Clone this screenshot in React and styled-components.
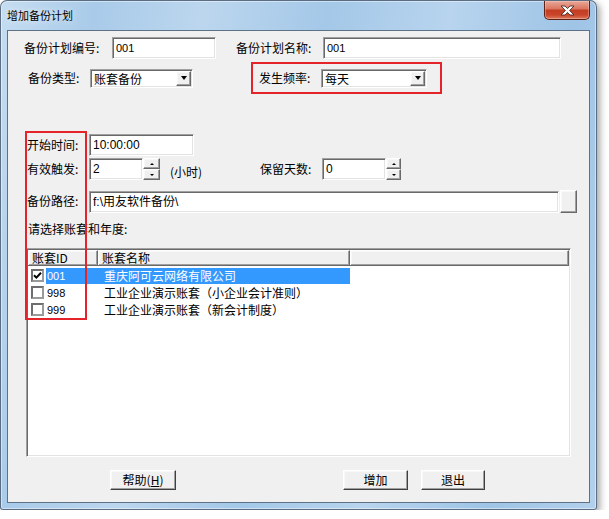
import styled, { createGlobalStyle, css } from "styled-components";

const GlobalStyle = createGlobalStyle`
  html, body {
    margin: 0;
    padding: 0;
    background: #ffffff;
  }
  body {
    font-family: "Noto Sans CJK SC", "Liberation Sans", sans-serif;
    font-size: 12px;
    color: #000;
  }
  * {
    box-sizing: border-box;
  }
`;

// classic win32 3d edges
const sunken = css`
  border: 1px solid;
  border-color: #a0a0a0 #ffffff #ffffff #a0a0a0;
  box-shadow: inset 1px 1px 0 #696969, inset -1px -1px 0 #e3e3e3;
`;

const raised = css`
  border: 1px solid;
  border-color: #ffffff #696969 #696969 #ffffff;
  box-shadow: inset -1px -1px 0 #a0a0a0, inset 1px 1px 0 #f8f8f8;
  background: #f0f0f0;
`;

const Window = styled.div`
  width: 597px;
  height: 510px;
  padding: 0 7px 7px;
  border-radius: 7px 7px 3px 3px;
  background: linear-gradient(
    100deg,
    #c6ddf1 0%,
    #a9cbe9 14%,
    #bcd6ee 30%,
    #a4c8e8 48%,
    #b8d4ee 66%,
    #9fc4e6 84%,
    #b3d1ec 100%
  );
  box-shadow: inset 0 0 0 1px rgba(38, 58, 82, 0.7),
    inset 0 0 0 2px rgba(255, 255, 255, 0.45), 3px 3px 7px rgba(0, 0, 0, 0.35);
  display: flex;
  flex-direction: column;
`;

const TitleBar = styled.div`
  height: 30px;
  display: flex;
  justify-content: space-between;
  align-items: flex-start;
`;

const Title = styled.span`
  margin-top: 8px;
  font-size: 11px;
  line-height: 14px;
  color: #000;
  text-shadow: 0 0 6px rgba(255, 255, 255, 0.9);
`;

const CloseButton = styled.div`
  width: 46px;
  height: 19px;
  margin-top: 1px;
  border: 1px solid #5e2116;
  border-top: none;
  border-radius: 0 0 5px 5px;
  background: linear-gradient(
    180deg,
    #e9a898 0%,
    #da7863 42%,
    #c43c21 52%,
    #c9472b 78%,
    #de7a5f 100%
  );
  box-shadow: inset 0 0 0 1px rgba(255, 220, 210, 0.35);
  display: flex;
  align-items: center;
  justify-content: center;
`;

const Client = styled.div`
  flex: 1;
  position: relative;
  background: #f0f0f0;
  border: 1px solid #5d7287;
  display: flex;
  flex-direction: column;
`;

const Row = styled.div`
  display: flex;
  align-items: ${(p) => p.$align || "center"};
  height: ${(p) => p.$h}px;
  margin-top: ${(p) => p.$top}px;
  padding-left: ${(p) => p.$pl}px;
`;

const Label = styled.span`
  flex: none;
  width: ${(p) => p.$w}px;
  white-space: nowrap;
  font-size: 12px;
  line-height: 14px;
`;

const TextBox = styled.div`
  ${sunken};
  flex: none;
  width: ${(p) => p.$w}px;
  height: 22px;
  margin-top: ${(p) => p.$top || 0}px;
  background: #fff;
  padding: 3px 0 0 3px;
  font-family: "Liberation Sans", "Noto Sans CJK SC", sans-serif;
  font-size: ${(p) => p.$fs || 12}px;
  line-height: 14px;
  white-space: nowrap;
`;

const Combo = styled.div`
  ${sunken};
  flex: none;
  width: ${(p) => p.$w}px;
  height: 19px;
  background: #fff;
  padding: 1px 1px 1px 3px;
  display: flex;
  align-items: center;
  justify-content: space-between;
  font-size: 12px;
`;

const DropButton = styled.div`
  ${raised};
  width: 15px;
  height: 15px;
  display: flex;
  align-items: center;
  justify-content: center;

  &::after {
    content: "";
    border-left: 3.5px solid transparent;
    border-right: 3.5px solid transparent;
    border-top: 4px solid #000;
  }
`;

const Spin = styled.div`
  flex: none;
  width: ${(p) => p.$w}px;
  height: 22px;
  display: flex;
  flex-direction: column;
`;

const SpinButton = styled.div`
  ${raised};
  height: 11px;
  display: flex;
  align-items: center;
  justify-content: center;

  &::after {
    content: "";
    border-left: 2px solid transparent;
    border-right: 2px solid transparent;
    ${(p) =>
      p.$down ? "border-top: 2px solid #000;" : "border-bottom: 2px solid #000;"}
  }
`;

const Unit = styled.span`
  flex: none;
  width: ${(p) => p.$w}px;
  margin-left: ${(p) => p.$ml}px;
  margin-top: 5px;
  font-size: 12px;
  line-height: 14px;
`;

const BrowseButton = styled.div`
  ${raised};
  flex: none;
  width: 17px;
  height: 23px;
  margin-left: 1px;
`;

const RedFrame = styled.div`
  flex: none;
  display: flex;
  align-items: center;
  width: ${(p) => p.$w}px;
  height: 32px;
  margin-left: ${(p) => p.$ml}px;
  padding-left: 6px;
  border: 2px solid #e5232b;
`;

const RedMark = styled.div`
  position: absolute;
  left: 17px;
  top: 100px;
  width: 62px;
  height: 189px;
  border: 2px solid #e5232b;
  pointer-events: none;
`;

const Hint = styled.div`
  margin: 9px 0 0 20px;
  height: 14px;
  font-size: 12px;
  line-height: 14px;
`;

const ListView = styled.div`
  ${sunken};
  width: 545px;
  height: 209px;
  margin: 12px 0 0 18px;
  padding: 1px;
  background: #fff;
  display: flex;
  flex-direction: column;
`;

const HeaderRow = styled.div`
  display: flex;
  height: 16px;
  border-bottom: 1px solid #696969;
`;

const HeaderCell = styled.div`
  ${raised};
  border-bottom: none;
  flex: ${(p) => (p.$w ? `0 0 ${p.$w}px` : "1")};
  height: 15px;
  padding-left: 3px;
  font-size: 12px;
  line-height: 13px;
  white-space: nowrap;
`;

const ListRow = styled.div`
  display: flex;
  align-items: center;
  height: 17px;
  padding-left: 3px;
  margin-top: ${(p) => p.$top || 0}px;
`;

const CheckBox = styled.div`
  flex: none;
  width: 13px;
  height: 13px;
  border: 2px solid;
  border-color: #6e6e6e #9a9a9a #9a9a9a #6e6e6e;
  background: #fff;
  display: flex;
  align-items: center;
  justify-content: center;
  margin-right: 2px;
`;

const Cell = styled.div`
  flex: none;
  width: ${(p) => p.$w}px;
  height: 16px;
  padding-left: ${(p) => p.$pl}px;
  font-family: ${(p) =>
    p.$latin ? `"Liberation Sans", sans-serif` : `"Noto Sans CJK SC", sans-serif`};
  font-size: ${(p) => (p.$latin ? 11 : 12)}px;
  line-height: 16px;
  white-space: nowrap;
  background: ${(p) => (p.$selected ? "#3399ff" : "transparent")};
  color: ${(p) => (p.$selected ? "#fff" : "#000")};
`;

const ButtonRow = styled.div`
  display: flex;
  height: 20px;
  margin-top: 13px;
  padding-left: 102px;
`;

const PushButton = styled.div`
  flex: none;
  width: ${(p) => p.$w}px;
  height: 20px;
  margin-left: ${(p) => p.$ml || 0}px;
  border: 1px solid;
  border-color: #ffffff #404040 #404040 #ffffff;
  box-shadow: inset -1px -1px 0 #a0a0a0, inset 1px 1px 0 #f8f8f8;
  background: #f0f0f0;
  display: flex;
  align-items: center;
  justify-content: center;
  font-size: 12px;
  line-height: 14px;
`;

const books = [
  { id: "001", name: "重庆阿可云网络有限公司", checked: true },
  { id: "998", name: "工业企业演示账套（小企业会计准则）" },
  { id: "999", name: "工业企业演示账套（新会计制度）" },
];

function CloseGlyph() {
  return (
    <svg width="15" height="11" viewBox="0 0 15 11">
      <path
        d="M1 1 H5 L7.5 3.6 L10 1 H14 L9.6 5.5 L14 10 H10 L7.5 7.4 L5 10 H1 L5.4 5.5 Z"
        fill="#fff"
        stroke="#4a2a24"
        strokeWidth="0.9"
        strokeLinejoin="round"
      />
    </svg>
  );
}

function Check() {
  return (
    <svg width="9" height="9" viewBox="0 0 9 9">
      <path d="M1 4.2 L3.4 6.6 L8 1.8" fill="none" stroke="#000" strokeWidth="2" />
    </svg>
  );
}

export default function App() {
  return (
    <>
      <GlobalStyle />
      <Window>
        <TitleBar>
          <Title>增加备份计划</Title>
          <CloseButton>
            <CloseGlyph />
          </CloseButton>
        </TitleBar>

        <Client>
          <Row $top={6} $h={22} $pl={16}>
            <Label $w={88}>备份计划编号:</Label>
            <TextBox $w={104} $fs={11}>001</TextBox>
            <Label $w={87} style={{ marginLeft: 20 }}>
              备份计划名称:
            </Label>
            <TextBox $w={238} $fs={11}>001</TextBox>
          </Row>

          <Row $top={3} $h={32} $pl={20}>
            <Label $w={62}>备份类型:</Label>
            <Combo $w={103}>
              账套备份
              <DropButton />
            </Combo>
            <RedFrame $w={191} $ml={58}>
              <Label $w={62}>发生频率:</Label>
              <Combo $w={106}>
                每天
                <DropButton />
              </Combo>
            </RedFrame>
          </Row>

          <Row $top={40} $h={22} $pl={19}>
            <Label $w={62}>开始时间:</Label>
            <TextBox $w={105}>10:00:00</TextBox>
          </Row>

          <Row $top={2} $h={22} $pl={19}>
            <Label $w={62}>有效触发:</Label>
            <TextBox $w={54}>2</TextBox>
            <Spin $w={17}>
              <SpinButton />
              <SpinButton $down />
            </Spin>
            <Unit $w={90} $ml={10}>
              (小时)
            </Unit>
            <Label $w={62}>保留天数:</Label>
            <TextBox $w={64}>0</TextBox>
            <Spin $w={15}>
              <SpinButton />
              <SpinButton $down />
            </Spin>
          </Row>

          <Row $top={10} $h={23} $pl={19} $align="flex-start">
            <Label $w={62} style={{ marginTop: 4 }}>
              备份路径:
            </Label>
            <TextBox $w={470} $top={1}>
              f:\用友软件备份\
            </TextBox>
            <BrowseButton />
          </Row>

          <Hint>请选择账套和年度:</Hint>

          <ListView>
            <HeaderRow>
              <HeaderCell $w={70}>账套ID</HeaderCell>
              <HeaderCell $w={252}>账套名称</HeaderCell>
              <HeaderCell />
            </HeaderRow>
            {books.map((b, i) => (
              <ListRow key={b.id} $top={i === 0 ? 1 : 0}>
                <CheckBox>{b.checked && <Check />}</CheckBox>
                <Cell $w={52} $pl={1} $latin $selected={b.checked}>
                  {b.id}
                </Cell>
                <Cell $w={252} $pl={6} $selected={b.checked}>
                  {b.name}
                </Cell>
              </ListRow>
            ))}
          </ListView>

          <ButtonRow>
            <PushButton $w={66}>
              帮助(<u>H</u>)
            </PushButton>
            <PushButton $w={65} $ml={167}>
              增加
            </PushButton>
            <PushButton $w={64} $ml={13}>
              退出
            </PushButton>
          </ButtonRow>

          <RedMark />
        </Client>
      </Window>
    </>
  );
}
